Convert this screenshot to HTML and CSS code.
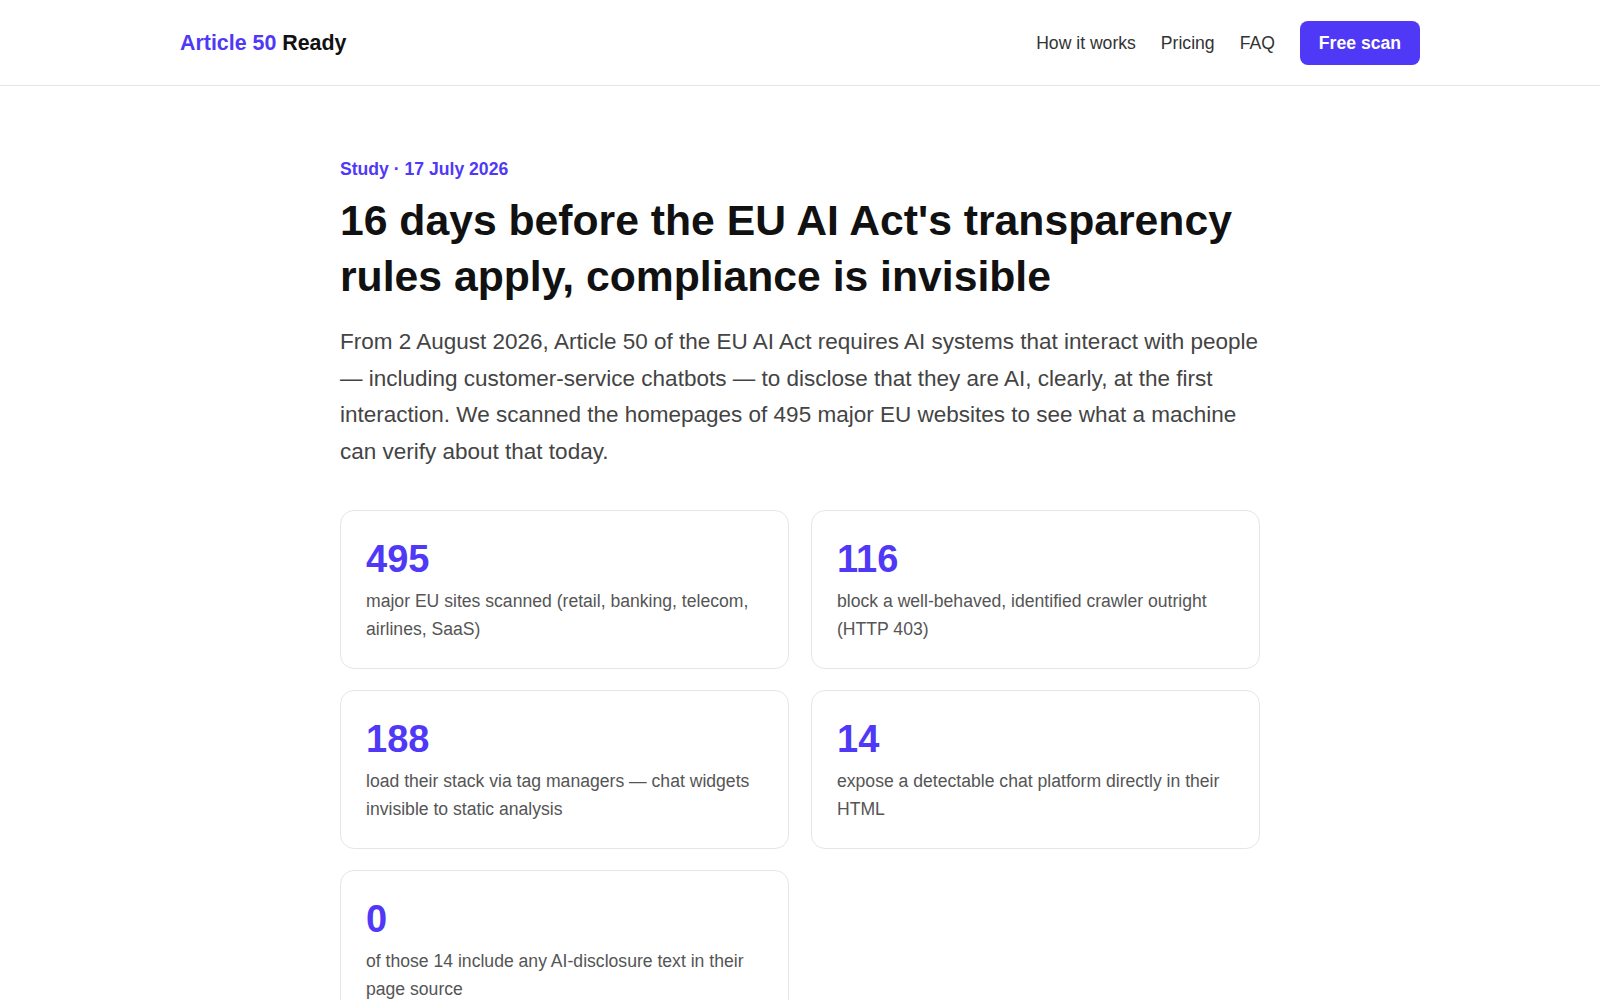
FILE: index.html
```html
<!DOCTYPE html>
<html lang="en">
<head>
<meta charset="utf-8">
<title>Article 50 Ready — Study</title>
<link rel="stylesheet" href="styles.css">
</head>
<body>
<header class="site-header">
  <div class="header-inner">
    <a class="logo" href="#"><span class="logo-accent">Article 50</span> Ready</a>
    <nav class="nav">
      <a class="nav-link" href="#">How it works</a>
      <a class="nav-link" href="#">Pricing</a>
      <a class="nav-link" href="#">FAQ</a>
      <a class="btn-primary" href="#">Free scan</a>
    </nav>
  </div>
</header>

<main class="article">
  <p class="eyebrow">Study · 17 July 2026</p>
  <h1 class="title">16 days before the EU AI Act's transparency rules apply, compliance is invisible</h1>
  <p class="lede">From 2 August 2026, Article 50 of the EU AI Act requires AI systems that interact with people — including customer-service chatbots — to disclose that they are AI, clearly, at the first interaction. We scanned the homepages of 495 major EU websites to see what a machine can verify about that today.</p>

  <section class="stats">
    <div class="stat-card">
      <div class="stat-num">495</div>
      <p class="stat-label">major EU sites scanned (retail, banking, telecom, airlines, SaaS)</p>
    </div>
    <div class="stat-card">
      <div class="stat-num">116</div>
      <p class="stat-label">block a well-behaved, identified crawler outright (HTTP 403)</p>
    </div>
    <div class="stat-card">
      <div class="stat-num">188</div>
      <p class="stat-label">load their stack via tag managers — chat widgets invisible to static analysis</p>
    </div>
    <div class="stat-card">
      <div class="stat-num">14</div>
      <p class="stat-label">expose a detectable chat platform directly in their HTML</p>
    </div>
    <div class="stat-card">
      <div class="stat-num">0</div>
      <p class="stat-label">of those 14 include any AI-disclosure text in their page source</p>
    </div>
  </section>
</main>
</body>
</html>
```

FILE: styles.css
```css
* {
  box-sizing: border-box;
}

body {
  margin: 0;
  background: #ffffff;
  color: #111111;
  font-family: "Liberation Sans", Arial, Helvetica, sans-serif;
}

a {
  text-decoration: none;
}

/* Top bar */
.site-header {
  border-bottom: 1px solid #e6e6e9;
}

.header-inner {
  max-width: 1240px;
  margin: 0 auto;
  padding: 21px 0 20px;
  display: flex;
  align-items: center;
  justify-content: space-between;
}

.logo {
  font-size: 21.4px;
  font-weight: 700;
  color: #111111;
}

.logo-accent {
  color: #4f39f6;
}

.nav {
  display: flex;
  align-items: center;
  gap: 25px;
}

.nav-link {
  font-size: 17.6px;
  color: #333333;
}

.btn-primary {
  display: inline-block;
  padding: 12px 19px;
  border-radius: 8px;
  background: #4f39f6;
  color: #ffffff;
  font-size: 17.6px;
  font-weight: 700;
  line-height: 20px;
}

/* Article body */
.article {
  max-width: 920px;
  margin: 0 auto;
  padding: 70px 0 40px;
}

.eyebrow {
  margin: 0 0 10px;
  font-size: 17.6px;
  line-height: 26px;
  font-weight: 700;
  color: #4f39f6;
}

.title {
  margin: 0 0 20px;
  font-size: 42.7px;
  line-height: 56px;
  font-weight: 700;
  color: #111111;
}

.lede {
  margin: 0 0 39px;
  font-size: 22.5px;
  line-height: 36.7px;
  color: #444444;
}

/* Figures grid */
.stats {
  display: grid;
  grid-template-columns: 1fr 1fr;
  row-gap: 21px;
  column-gap: 22px;
}

.stat-card {
  border: 1px solid #e6e6e9;
  border-radius: 14px;
  padding: 28px 24px 24px 25px;
}

.stat-num {
  font-size: 38px;
  line-height: 1.1;
  font-weight: 700;
  color: #4f39f6;
  margin-bottom: 6px;
}

.stat-label {
  margin: 0;
  font-size: 17.6px;
  line-height: 28.6px;
  color: #555555;
}
```
